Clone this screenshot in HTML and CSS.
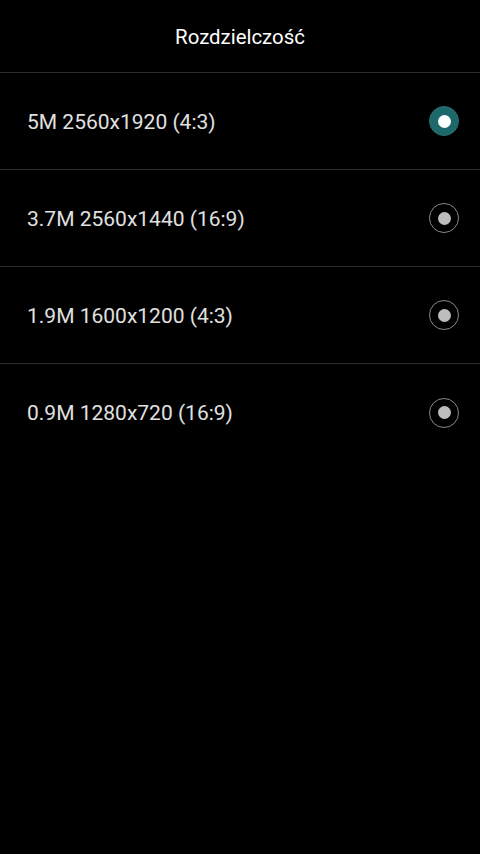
FILE: index.html
```html
<!DOCTYPE html>
<html lang="pl">
	<head>
		<meta charset="utf-8">
		<title>Rozdzielczość</title>
		<meta name="viewport" content="width=device-width">
		<link rel="stylesheet" href="styles.css">
	</head>
	<body>
		<div id="wrap">
			<header>
				<h1>Rozdzielczość</h1>
			</header>
			<main>
				<ul class="options">
					<li class="option selected"><span class="label">5M 2560x1920 (4:3)</span><span class="radio"></span></li>
					<li class="option"><span class="label">3.7M 2560x1440 (16:9)</span><span class="radio"></span></li>
					<li class="option"><span class="label">1.9M 1600x1200 (4:3)</span><span class="radio"></span></li>
					<li class="option"><span class="label">0.9M 1280x720 (16:9)</span><span class="radio"></span></li>
				</ul>
			</main>
		</div>
	</body>
</html>
```

FILE: styles.css
```css
* {
	margin: 0px;
	padding: 0px;
	box-sizing: border-box;
}

html, body {
	background-color: #000;
	height: 100%;
}

#wrap {
	width: 480px;
	height: 854px;
	font-family: Roboto, "Noto Sans", sans-serif;
}

header {
	height: 73px;
	border-bottom: 1px solid #2c2c2c;
	display: flex;
	align-items: center;
	justify-content: center;
}

h1 {
	font-size: 20.4px;
	font-weight: normal;
	color: #fff;
	margin-top: 1px;
}

.options {
	list-style: none;
}

.option {
	height: 97px;
	border-bottom: 1px solid #2c2c2c;
	display: flex;
	align-items: center;
	justify-content: space-between;
	padding: 0 21px 0 27px;
}

/* 最後の行は線なし */
.option:last-child {
	border-bottom: none;
}

.label {
	font-size: 21px;
	color: #e0e0e0;
	margin-top: 1px;
}

/* 未選択のラジオ */
.radio {
	width: 30px;
	height: 30px;
	border-radius: 50%;
	border: 1px solid #8a8a8a;
	display: flex;
	align-items: center;
	justify-content: center;
}

.radio::after {
	content: "";
	width: 13px;
	height: 13px;
	border-radius: 50%;
	background-color: #bdbdbd;
}

.selected .radio {
	background-color: #1d686b;
	border-color: #2d6f72;
}

.selected .radio::after {
	background-color: #fff;
}
```
